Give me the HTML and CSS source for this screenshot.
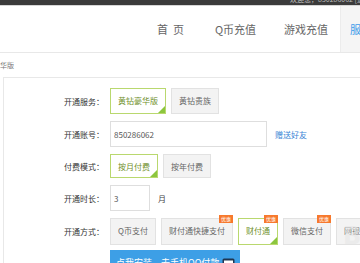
FILE: index.html
```html
<!DOCTYPE html>
<html lang="zh-CN">
<head>
  <meta charset="UTF-8">
  <title>黄钻豪华版开通</title>
  <link rel="stylesheet" href="styles.css">
</head>
<body>
  <div class="topbar">
    <div class="topbar-text">欢迎您，850286062 [退出] | 帮助中心</div>
  </div>

  <div class="header">
    <div class="nav">
      <a class="nav-item">首&nbsp;&nbsp;页</a>
      <a class="nav-item">Q币充值</a>
      <a class="nav-item">游戏充值</a>
      <a class="nav-item active">服务开通</a>
    </div>
  </div>

  <div class="crumb">华版</div>

  <div class="form">
    <div class="row">
      <div class="label">开通服务：</div>
      <span class="opt selected">黄钻豪华版</span>
      <span class="opt">黄钻贵族</span>
    </div>

    <div class="row">
      <div class="label">开通账号：</div>
      <input class="field account" type="text" value="850286062">
      <a class="link">赠送好友</a>
    </div>

    <div class="row short">
      <div class="label">付费模式：</div>
      <span class="opt selected">按月付费</span>
      <span class="opt">按年付费</span>
    </div>

    <div class="row">
      <div class="label">开通时长：</div>
      <input class="field months" type="text" value="3">
      <span class="unit">月</span>
    </div>

    <div class="row pay">
      <div class="label">开通方式：</div>
      <span class="opt">Q币支付</span>
      <span class="opt">财付通快捷支付<i class="badge">优惠</i></span>
      <span class="opt selected">财付通<i class="badge">优惠</i></span>
      <span class="opt">微信支付<i class="badge">优惠</i></span>
      <span class="opt">网银支付</span>
    </div>

    <div class="row qq">
      <div class="label"></div>
      <div class="qq-btn">
        <span>点我安装，去手机QQ付款</span>
        <svg class="phone" width="13" height="16" viewBox="0 0 13 16">
          <rect x="0.5" y="0.5" width="12" height="15" rx="1.5" fill="#1f3550"/>
          <rect x="2" y="2.5" width="9" height="11" fill="#fff"/>
          <circle cx="6.5" cy="8" r="3" fill="#f07a3a"/>
          <circle cx="6.5" cy="8" r="1.4" fill="#fff"/>
        </svg>
      </div>
    </div>
  </div>

  <div class="watermark">B</div>
</body>
</html>
```

FILE: styles.css
```css
body {
  margin: 0;
  font-family: "Noto Sans CJK SC", "Noto Sans", sans-serif;
  background: #fff;
  color: #333;
  overflow: hidden;
}
a {
  text-decoration: none;
}

/* top strip */
.topbar {
  height: 5px;
  background: #3b3b3b;
  border-bottom: 1px solid #d6d6d6;
  overflow: hidden;
}
.topbar-text {
  margin: -5px 0 0 290px;
  font-size: 7px;
  line-height: 9px;
  color: #bdbdbd;
  white-space: nowrap;
}

/* main nav */
.header {
  height: 46px;
  border-bottom: 1px solid #e8e8e8;
}
.nav {
  display: flex;
  margin-left: 143px;
  height: 46px;
}
.nav-item {
  padding: 0 14px;
  line-height: 46px;
  font-size: 11px;
  color: #666;
  white-space: nowrap;
}
.nav-item:nth-child(2) {
  padding-left: 17px;
}
.nav-item.active {
  margin-left: -2px;
  padding-left: 9px;
  background: #f5f5f5;
  border-left: 1px solid #ececec;
  color: #3d9be9;
}

.crumb {
  height: 24px;
  line-height: 24px;
  font-size: 7px;
  color: #777;
}

/* form box */
.form {
  margin-left: 3px;
  padding-top: 10px;
  border-top: 1px solid #e8e8e8;
  border-left: 1px solid #e8e8e8;
  height: 300px;
}
.row {
  display: flex;
  align-items: center;
  height: 26px;
  margin-bottom: 7px;
  white-space: nowrap;
}
.row.short {
  height: 24px;
}
.row.pay {
  height: 27px;
  margin-bottom: 5px;
}
.label {
  flex: none;
  width: 100px;
  margin-right: 6px;
  text-align: right;
  font-size: 8px;
  color: #333;
}

.opt {
  position: relative;
  flex: none;
  box-sizing: border-box;
  height: 100%;
  padding: 0 7px;
  margin-right: 5px;
  line-height: 24px;
  font-size: 8px;
  color: #666;
  background: #f3f3f3;
  border: 1px solid #e2e2e2;
}
.opt.selected {
  background: #fff;
  border-color: #b9d86e;
  color: #6f8f2a;
}
.opt.selected::after {
  content: "";
  position: absolute;
  right: 0;
  bottom: 0;
  border-left: 7px solid transparent;
  border-bottom: 7px solid #8cc63e;
}
.badge {
  position: absolute;
  top: -4px;
  right: -1px;
  padding: 0 2px;
  font-style: normal;
  font-size: 5px;
  line-height: 8px;
  color: #fff;
  background: #f7792d;
}

.field {
  box-sizing: border-box;
  height: 26px;
  padding: 0 3px;
  margin: 0;
  border: 1px solid #dedede;
  font-family: inherit;
  font-size: 8px;
  color: #555;
  outline: none;
}
.account {
  width: 157px;
}
.months {
  width: 40px;
}
.link {
  margin-left: 8px;
  font-size: 8px;
  color: #3a86d6;
}
.unit {
  margin-left: 8px;
  font-size: 8px;
  color: #444;
}

.qq {
  height: 24px;
}
.qq-btn {
  display: flex;
  align-items: center;
  justify-content: space-between;
  box-sizing: border-box;
  width: 130px;
  height: 24px;
  padding: 0 5px 0 6px;
  background: #3d9fe6;
  color: #fff;
  font-size: 9px;
}
.phone {
  flex: none;
  margin-top: 8px;
}

.watermark {
  position: absolute;
  left: 343px;
  top: 222px;
  font-family: "DejaVu Sans", sans-serif;
  font-size: 24px;
  font-weight: bold;
  color: rgba(230, 230, 230, 0.6);
  pointer-events: none;
}
```
